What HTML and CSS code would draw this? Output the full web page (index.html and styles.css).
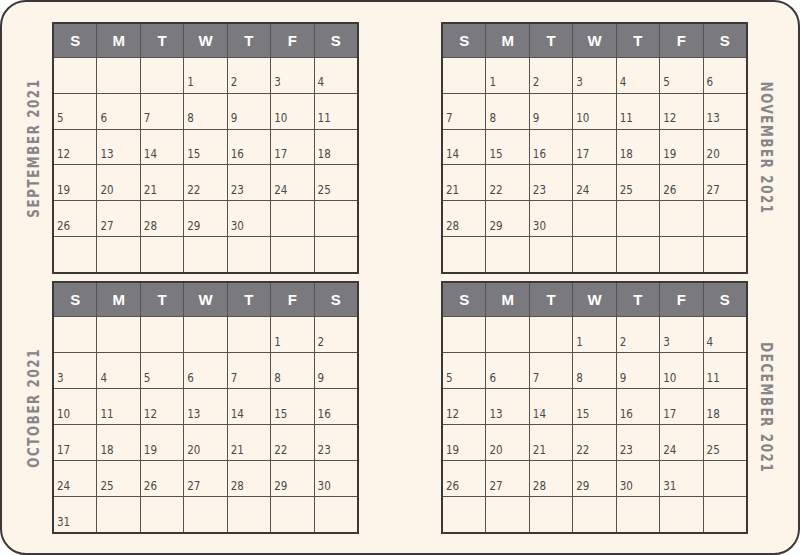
FILE: index.html
```html
<!DOCTYPE html>
<html>
<head>
<meta charset="utf-8">
<link rel="stylesheet" href="styles.css">
</head>
<body>
<div class="page">
  <div class="label label-left label-tl">SEPTEMBER 2021</div>
  <div class="cal cal-tl">
    <div class="hd">S</div><div class="hd">M</div><div class="hd">T</div><div class="hd">W</div><div class="hd">T</div><div class="hd">F</div><div class="hd">S</div>
    <div class="d"></div><div class="d"></div><div class="d"></div><div class="d">1</div><div class="d">2</div><div class="d">3</div><div class="d">4</div>
    <div class="d">5</div><div class="d">6</div><div class="d">7</div><div class="d">8</div><div class="d">9</div><div class="d">10</div><div class="d">11</div>
    <div class="d">12</div><div class="d">13</div><div class="d">14</div><div class="d">15</div><div class="d">16</div><div class="d">17</div><div class="d">18</div>
    <div class="d">19</div><div class="d">20</div><div class="d">21</div><div class="d">22</div><div class="d">23</div><div class="d">24</div><div class="d">25</div>
    <div class="d">26</div><div class="d">27</div><div class="d">28</div><div class="d">29</div><div class="d">30</div><div class="d"></div><div class="d"></div>
    <div class="d"></div><div class="d"></div><div class="d"></div><div class="d"></div><div class="d"></div><div class="d"></div><div class="d"></div>
  </div>
  <div class="cal cal-tr">
    <div class="hd">S</div><div class="hd">M</div><div class="hd">T</div><div class="hd">W</div><div class="hd">T</div><div class="hd">F</div><div class="hd">S</div>
    <div class="d"></div><div class="d">1</div><div class="d">2</div><div class="d">3</div><div class="d">4</div><div class="d">5</div><div class="d">6</div>
    <div class="d">7</div><div class="d">8</div><div class="d">9</div><div class="d">10</div><div class="d">11</div><div class="d">12</div><div class="d">13</div>
    <div class="d">14</div><div class="d">15</div><div class="d">16</div><div class="d">17</div><div class="d">18</div><div class="d">19</div><div class="d">20</div>
    <div class="d">21</div><div class="d">22</div><div class="d">23</div><div class="d">24</div><div class="d">25</div><div class="d">26</div><div class="d">27</div>
    <div class="d">28</div><div class="d">29</div><div class="d">30</div><div class="d"></div><div class="d"></div><div class="d"></div><div class="d"></div>
    <div class="d"></div><div class="d"></div><div class="d"></div><div class="d"></div><div class="d"></div><div class="d"></div><div class="d"></div>
  </div>
  <div class="label label-right label-tr">NOVEMBER 2021</div>

  <div class="label label-left label-bl">OCTOBER 2021</div>
  <div class="cal cal-bl">
    <div class="hd">S</div><div class="hd">M</div><div class="hd">T</div><div class="hd">W</div><div class="hd">T</div><div class="hd">F</div><div class="hd">S</div>
    <div class="d"></div><div class="d"></div><div class="d"></div><div class="d"></div><div class="d"></div><div class="d">1</div><div class="d">2</div>
    <div class="d">3</div><div class="d">4</div><div class="d">5</div><div class="d">6</div><div class="d">7</div><div class="d">8</div><div class="d">9</div>
    <div class="d">10</div><div class="d">11</div><div class="d">12</div><div class="d">13</div><div class="d">14</div><div class="d">15</div><div class="d">16</div>
    <div class="d">17</div><div class="d">18</div><div class="d">19</div><div class="d">20</div><div class="d">21</div><div class="d">22</div><div class="d">23</div>
    <div class="d">24</div><div class="d">25</div><div class="d">26</div><div class="d">27</div><div class="d">28</div><div class="d">29</div><div class="d">30</div>
    <div class="d">31</div><div class="d"></div><div class="d"></div><div class="d"></div><div class="d"></div><div class="d"></div><div class="d"></div>
  </div>
  <div class="cal cal-br">
    <div class="hd">S</div><div class="hd">M</div><div class="hd">T</div><div class="hd">W</div><div class="hd">T</div><div class="hd">F</div><div class="hd">S</div>
    <div class="d"></div><div class="d"></div><div class="d"></div><div class="d">1</div><div class="d">2</div><div class="d">3</div><div class="d">4</div>
    <div class="d">5</div><div class="d">6</div><div class="d">7</div><div class="d">8</div><div class="d">9</div><div class="d">10</div><div class="d">11</div>
    <div class="d">12</div><div class="d">13</div><div class="d">14</div><div class="d">15</div><div class="d">16</div><div class="d">17</div><div class="d">18</div>
    <div class="d">19</div><div class="d">20</div><div class="d">21</div><div class="d">22</div><div class="d">23</div><div class="d">24</div><div class="d">25</div>
    <div class="d">26</div><div class="d">27</div><div class="d">28</div><div class="d">29</div><div class="d">30</div><div class="d">31</div><div class="d"></div>
    <div class="d"></div><div class="d"></div><div class="d"></div><div class="d"></div><div class="d"></div><div class="d"></div><div class="d"></div>
  </div>
  <div class="label label-right label-br">DECEMBER 2021</div>
</div>
</body>
</html>
```
FILE: styles.css
```css
* { box-sizing: border-box; }
html, body { margin: 0; padding: 0; background: #ffffff; }
body { width: 800px; height: 555px; overflow: hidden; }

.page {
  width: 800px;
  height: 555px;
  border: 2px solid #3b3937;
  border-radius: 26px;
  background: #fdf5ea;
  display: grid;
  grid-template-columns: 50px 307px 82px 307px 50px;
  grid-template-rows: 20px 252px 7px 253px 19px;
}

.cal {
  display: grid;
  grid-template-columns: repeat(7, 1fr);
  grid-template-rows: 33px repeat(6, 1fr);
  gap: 1px;
  background: #555350;
  border: 2px solid #3b3937;
}
.cal-tl { grid-column: 2; grid-row: 2; }
.cal-tr { grid-column: 4; grid-row: 2; }
.cal-bl { grid-column: 2; grid-row: 4; }
.cal-br { grid-column: 4; grid-row: 4; }

.hd {
  background: #7a7a7e;
  color: #ffffff;
  font-family: "Liberation Sans", Arial, sans-serif;
  font-weight: bold;
  font-size: 15px;
  display: flex;
  align-items: center;
  justify-content: center;
}

.d {
  background: #fdf5ea;
  color: #4a4947;
  font-family: "Liberation Sans Narrow", "DejaVu Sans Condensed", "DejaVu Sans", sans-serif;
  font-stretch: condensed;
  font-size: 11.5px;
  line-height: 1;
  display: flex;
  align-items: flex-end;
  padding: 0 0 4px 3px;
}

.label {
  font-family: "DejaVu Sans Condensed", "DejaVu Sans", sans-serif;
  font-stretch: condensed;
  font-weight: bold;
  font-size: 16.5px;
  letter-spacing: 2px;
  color: #86858a;
  writing-mode: vertical-rl;
  align-self: center;
  white-space: nowrap;
}
.label-left {
  transform: rotate(180deg) scaleY(0.8);
  grid-column: 1;
  justify-self: end;
  margin-right: 9px;
}
.label-right {
  transform: scaleY(0.8);
  grid-column: 5;
  justify-self: start;
  margin-left: 9px;
}
.label-tl, .label-tr { grid-row: 2; }
.label-bl, .label-br { grid-row: 4; }
```
